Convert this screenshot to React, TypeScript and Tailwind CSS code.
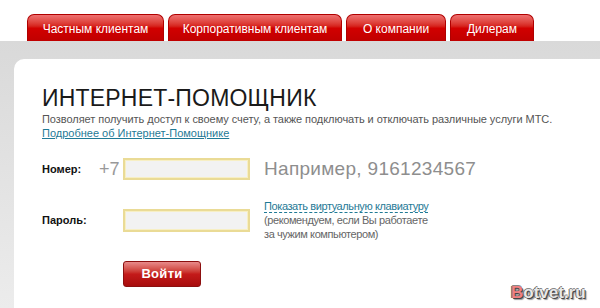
import React from "react";

const tabs = [
  { label: "Частным клиентам", w: "w-[137px]" },
  { label: "Корпоративным клиентам", w: "w-[174px]" },
  { label: "О компании", w: "w-[100px]" },
  { label: "Дилерам", w: "w-[84px]" },
];

export default function App() {
  return (
    <div
      className="relative w-[600px] h-[308px] overflow-hidden bg-white flex flex-col"
      style={{ fontFamily: '"Liberation Sans", Arial, sans-serif' }}
    >
      {/* Tabs */}
      <div className="h-[41px] shrink-0 flex items-end pl-[27px] gap-[4px]">
        {tabs.map((t) => (
          <div
            key={t.label}
            className={`${t.w} h-[27px] rounded-t-[7px] border border-b-0 border-[#b00000] bg-gradient-to-b from-[#ee7070] via-[#d20000] to-[#c00000] flex items-center justify-center text-white text-[12px] pt-[1px]`}
          >
            {t.label}
          </div>
        ))}
      </div>

      {/* Gray band & card */}
      <div className="flex-1 flex flex-col pt-[18px] pl-[14px] bg-gradient-to-b from-[#d9d9d9] to-[#ececec]">
        <div className="flex-1 bg-white rounded-tl-[10px] pl-[28px] pt-[25px] flex flex-col">
          <h1 className="text-[23px] leading-[28px] text-[#1a1a1a] font-normal tracking-[0.2px]">
            ИНТЕРНЕТ-ПОМОЩНИК
          </h1>
          <p className="text-[11px] leading-[14px] text-[#555] tracking-[-0.05px]">
            Позволяет получить доступ к своему счету, а также подключать и отключать различные услуги МТС.
          </p>
          <a className="text-[11px] leading-[14px] text-[#1f7a96] underline self-start">
            Подробнее об Интернет-Помощнике
          </a>

          {/* Number row */}
          <div className="flex items-center mt-[18px] h-[22px]">
            <div className="w-[57px] text-[11px] font-bold text-[#111]">Номер:</div>
            <div className="w-[24px] text-[18px] text-[#999]">+7</div>
            <div className="w-[127px] h-[22px] border-2 border-[#eadb96] bg-[#f2f2f2] shadow-[inset_0_0_0_1px_#f7efc4]" />
            <div className="ml-[14px] text-[19px] tracking-[0.3px] text-[#8e8e8e]">Например, 9161234567</div>
          </div>

          {/* Password row */}
          <div className="flex items-center mt-[20px]">
            <div className="w-[81px] text-[11px] font-bold text-[#111]">Пароль:</div>
            <div className="w-[127px] h-[23px] border-2 border-[#eadb96] bg-[#f2f2f2] shadow-[inset_0_0_0_1px_#f7efc4]" />
            <div className="ml-[14px] flex flex-col text-[11px] text-[#666] leading-[13.5px] tracking-[-0.4px]">
              <span className="text-[#1f7a96] border-b border-dashed border-[#1f7a96] self-start leading-[12px]">
                Показать виртуальную клавиатуру
              </span>
              <span className="mt-[1px]">(рекомендуем, если Вы работаете</span>
              <span>за чужим компьютером)</span>
            </div>
          </div>

          {/* Button */}
          <div className="mt-[20px] pl-[81px]">
            <button className="w-[78px] h-[26px] rounded-[3px] border border-[#8c0f0f] bg-gradient-to-b from-[#e88a8a] via-[#c41a1a] to-[#a80c0c] text-white font-bold text-[13px] tracking-[0.3px]">
              Войти
            </button>
          </div>
        </div>
      </div>

      {/* Watermark */}
      <div
        className="absolute left-[511px] top-[280px] text-[17px] font-bold"
        style={{ textShadow: "1px 1px 0 #444, -1px 0 0 #666, 0 -1px 0 #888, 2px 2px 1px #999" }}
      >
        <span className="text-[#f08080]">B</span>
        <span className="text-[#e8e8e8]">otvet.ru</span>
      </div>
    </div>
  );
}
